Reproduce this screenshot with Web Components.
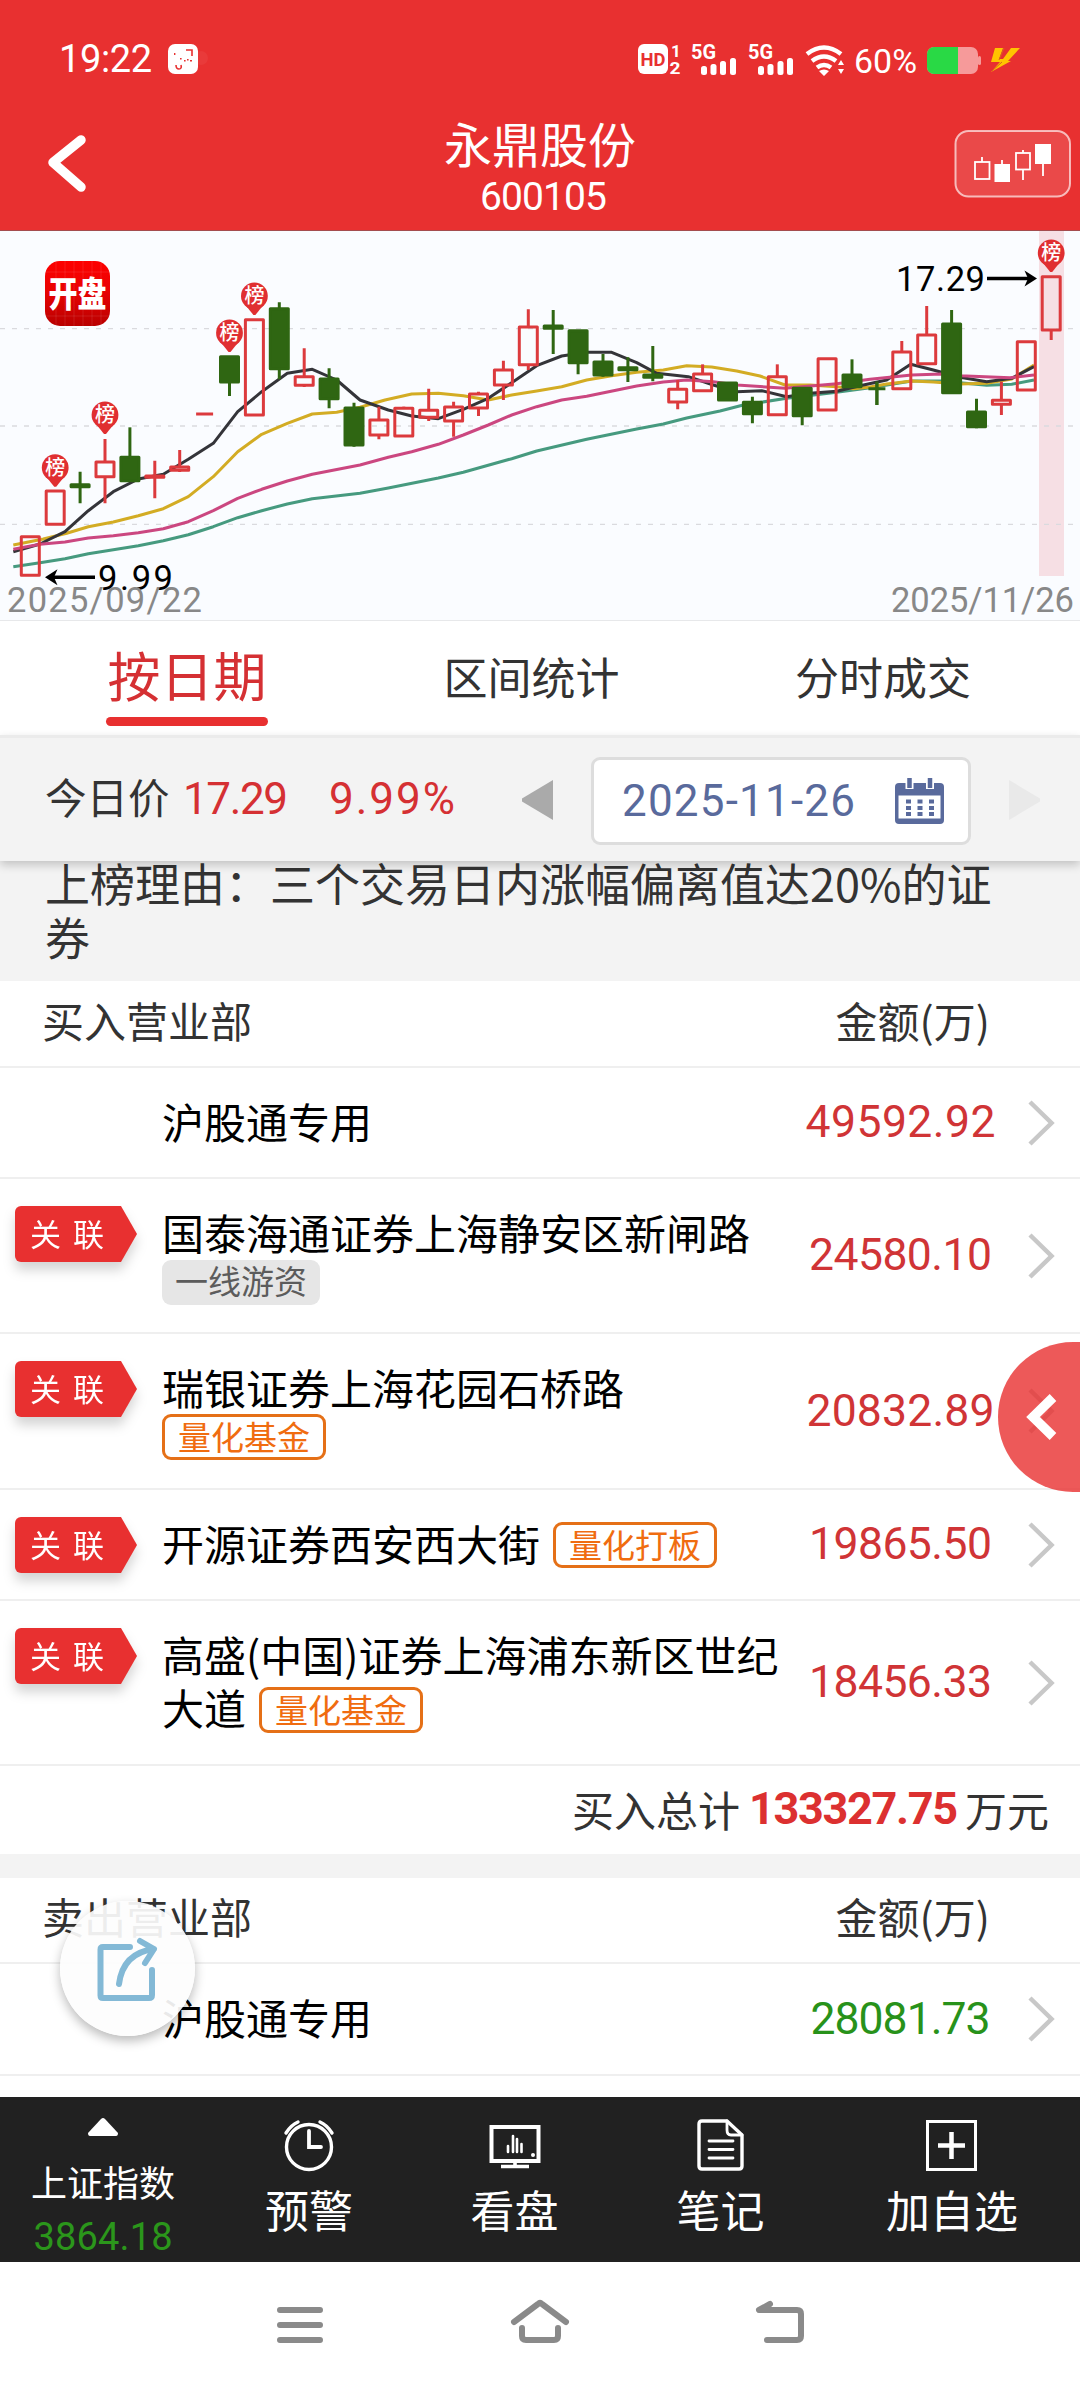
<!DOCTYPE html>
<html lang="zh-CN">
<head>
<meta charset="utf-8">
<title>永鼎股份 600105</title>
<style>
html,body{margin:0;padding:0}
body{width:1080px;height:2388px;overflow:hidden;background:#fff;font-family:Roboto,"Noto Sans CJK SC",sans-serif;color:#333}
</style>
</head>
<body>
<stock-app></stock-app>
<script>
const define=(name,html,init)=>{
  const tpl=document.createElement('template');
  tpl.innerHTML=html;
  customElements.define(name,class extends HTMLElement{
    connectedCallback(){
      if(this.shadowRoot)return;
      this.attachShadow({mode:'open'}).append(tpl.content.cloneNode(true));
      if(init)init.call(this,this.shadowRoot);
    }
  });
};

/* Number label: spaces its characters so that the run is exactly w pixels wide */
define('num-text','<style>:host{display:inline-block;white-space:nowrap;line-height:1}span{display:inline-block}</style><span></span>',function(r){
  const s=r.querySelector('span'),t=this.getAttribute('text'),w=+this.getAttribute('w');
  s.textContent=t;
  this.style.fontSize=this.getAttribute('size')+'px';
  const g=(w-s.getBoundingClientRect().width)/(t.length-1);
  s.style.letterSpacing=g+'px';
  s.style.marginRight=-g+'px';
});

define('status-bar',`<style>
:host{display:flex;height:88px;padding-top:29px;box-sizing:border-box;color:#fff}
num-text{margin:11px 0 0 59px}
svg{display:block;width:60px;height:60px;margin-left:16px}
.r{width:400px;margin-left:auto;margin-right:50px}
</style>
<num-text text="19:22" size="38" w="93"></num-text>
<svg viewBox="168 29 60 60"><rect x="168" y="44" width="30" height="30" rx="7" fill="#fff"/><circle cx="201" cy="58" r="7" fill="#fff" opacity=".05"/><path d="M186 50h6v6M176 65q0 4 3 4t2-4" fill="none" stroke="#e83030" stroke-width="1.6"/><path d="M180 58h1.6v1.6H180zM184 60h1.6v1.6H184zM190 60h2v1.6h-2zM174 53h1.4v2H174zM187 59h1.6v1.6H187z" fill="#e83030"/></svg>
<svg class="r" viewBox="630 29 400 60" fill="#fff" font-weight="700">
<rect x="638" y="44" width="30" height="30" rx="6"/><text x="640.500" y="66" font-size="18" textLength="25" lengthAdjust="spacingAndGlyphs" fill="#e83030">HD</text>
<text x="671" y="57" font-size="17">1</text><text x="669.500" y="74" font-size="17" textLength="11" lengthAdjust="spacingAndGlyphs">2</text>
<text x="691" y="59" font-size="20" textLength="25" lengthAdjust="spacingAndGlyphs">5G</text>
<rect x="701" y="66" width="6" height="9" rx="2.500"/><rect x="710.500" y="64" width="6" height="11" rx="2.500"/><rect x="720" y="61" width="6" height="14" rx="2.500"/><rect x="730" y="58" width="6" height="17" rx="2.500"/>
<text x="748" y="59" font-size="20" textLength="25" lengthAdjust="spacingAndGlyphs">5G</text>
<rect x="758" y="66" width="6" height="9" rx="2.500"/><rect x="767.500" y="64" width="6" height="11" rx="2.500"/><rect x="777.500" y="61" width="6" height="14" rx="2.500"/><rect x="787" y="58" width="6" height="17" rx="2.500"/>
<g fill="none" stroke="#fff" stroke-width="4.500"><path d="M807 54q17-13 34 0"/><path d="M812 61q12-9 24 0"/><path d="M817 67.500q7-5 14 0"/></g><path d="M819 71q5-3 10 0l-5 5zM838 65l3-5 3 5zM838 69h6l-3 5z"/>
<text x="854" y="73" font-size="32.500" font-weight="400" textLength="63" lengthAdjust="spacingAndGlyphs">60%</text>
<rect x="927" y="47" width="51" height="27" rx="7" fill="#f69a9a"/><path d="M934 47h24v27h-24a7 7 0 0 1-7-7V54a7 7 0 0 1 7-7z" fill="#29d945"/><rect x="978" y="56" width="3" height="9" rx="1.500" fill="#f69a9a"/>
<path d="M995 48h8l-4 11h4l8-11h9l-12 13h3l-20 11 9-10h-9z" fill="#ffc400"/><path d="M1004 48l-5 12M992 71l10-9" stroke="#d8641d" stroke-width="1"/>
</svg>`);

define('title-bar',`<style>
:host{display:grid;grid-template-columns:360px 1fr 360px;height:142px;color:#fff}
svg{display:block}
.b{width:60px;height:70px;margin:41px 0 0 40px}
.t{text-align:center;display:flex;flex-direction:column;align-items:center}
.n{font-size:48px;line-height:56px;margin-top:31px}
num-text{margin:3px 0 0 7px}
.k{margin:42px 0 0 234px;width:117px;height:68px}
</style>
<svg class="b" viewBox="40 129 60 70"><path d="M81 140L53 162.500 81 187" fill="none" stroke="#fff" stroke-width="9.500" stroke-linecap="round" stroke-linejoin="round"/></svg>
<div class="t"><div class="n">永鼎股份</div><num-text text="600105" size="39" w="127"></num-text></div>
<svg class="k" viewBox="954 130 117 68"><rect x="955.500" y="131" width="114.500" height="65.500" rx="13" fill="#fff" fill-opacity=".12" stroke="#fff" stroke-opacity=".65" stroke-width="2"/><g fill="none" stroke="#fff" stroke-width="1.800"><path d="M982 157v5M1002 160v5M1023 150v3M1023 170v10M1043 164v12"/><rect x="975" y="162" width="14.500" height="17"/><rect x="1016" y="153" width="14" height="16.500"/></g><rect x="994.500" y="164" width="15.500" height="18" fill="#fff"/><rect x="1035" y="144" width="16" height="20" fill="#fff"/></svg>`);

define('k-chart','<style>:host{display:block;height:391px;background:#fafcff;border-top:1px solid #a44c4e;border-bottom:1px solid #e7e8ea;box-sizing:border-box}svg{display:block}</style><svg width="1080" height="389" viewBox="0 231 1080 389"></svg>',function(r){
  const Y=v=>230+v/3, X=i=>30.3+24.9*i, RED='#dc3a3d', GREEN='#2f6612';
  let h='<rect x="1039" y="231" width="25" height="345" fill="#f6dfe4"/>';
  [328.7,426,524.3].forEach(y=>h+=`<path d="M0 ${y}H1074" stroke="#dadade" stroke-width="1.3" stroke-dasharray="5 7"/>`);
  const lines=[
   ['#469a7f','40,1010 120,998 195,986 265,971 415,947 490,932 565,914 640,890 713,863 785,842 862,822 937,806 1080,790 1165,774 1315,744 1390,727 1535,686 1610,663 1760,628 1910,597 1990,582 2060,564 2160,543 2230,525 2360,505 2510,487 2610,473 2735,453 2825,453 2960,466 3035,463 3102,450'],
   ['#d3ac24','40,945 130,927 200,910 265,890 340,876 415,857 490,836 565,800 640,740 713,665 785,613 862,580 937,552 1010,547 1080,532 1155,510 1235,492 1315,490 1390,497 1465,510 1535,495 1610,483 1685,470 1760,450 1835,437 1910,427 1990,420 2060,407 2135,411 2210,423 2280,438 2355,465 2430,465 2510,470 2560,476 2610,471 2660,462 2735,453 2800,456 2880,462 2960,460 3035,447 3102,405'],
   ['#343439','40,965 120,942 195,905 265,842 340,785 415,747 490,733 565,688 640,640 713,545 785,485 862,430 937,418 1010,450 1080,510 1165,540 1235,558 1315,566 1390,538 1465,505 1535,458 1610,407 1685,378 1760,367 1835,367 1910,398 1970,430 2065,440 2140,465 2210,485 2285,482 2360,500 2430,490 2510,484 2580,467 2660,450 2732,403 2800,420 2880,442 2960,455 3035,445 3102,410'],
   ['#cb4780','40,958 120,943 195,936 265,924 340,917 415,908 490,896 565,875 640,842 713,805 785,778 862,753 937,733 1080,705 1165,682 1235,665 1315,643 1390,615 1465,585 1535,555 1610,530 1685,510 1760,499 1910,468 1990,456 2060,450 2140,455 2210,465 2355,475 2510,461 2610,448 2735,435 2825,432 2880,437 3030,443 3102,435']];
  lines.forEach(([c,p])=>h+=`<polyline fill="none" stroke="${c}" stroke-width="3" stroke-linejoin="round" points="${p.split(' ').map(q=>{const[a,b]=q.split(',');return (a/3).toFixed(1)+','+Y(+b).toFixed(1)}).join(' ')}"/>`);
  /* side, high, body top, body bottom, low */
  const data='r920,920,1036,1036 r783,783,883,883 g725,764,770,820 r627,696,740,820 g592,682,752,752 r692,738,742,805 r660,711,721,726 d g378,380,456,498 r269,269,555,555 g217,236,416,448 r355,440,466,471 g415,447,506,535 g518,534,645,650 r530,570,615,628 r530,535,618,618 r476,541,562,573 r515,531,573,620 r485,492,534,558 r392,420,465,510 r238,291,404,420 g240,288,295,372 g300,302,398,433 g372,396,435,440 g382,413,419,456 g348,435,442,454 r450,478,516,538 r403,432,482,482 g457,459,510,510 g500,517,551,580 r403,440,554,554 g472,475,557,586 r386,386,540,540 g388,435,470,470 t455,476,476,525 r333,366,476,480 r228,315,401,401 g240,282,488,488 g506,546,590,595 r455,511,523,555 r335,335,480,480 r140,140,300,330'.split(' ');
  data.forEach((s,i)=>{
    const x=X(i);
    if(s==='d'){h+=`<path d="M${x-8.5} ${Y(552)}h17" stroke="${RED}" stroke-width="3"/>`;return}
    const red=s[0]==='r',c=red?RED:GREEN,[a,t,b,l]=s.slice(1).split(',').map(v=>Y(+v));
    h+=`<path d="M${x} ${a}V${t}M${x} ${b}V${l}" stroke="${c}" stroke-width="3"/>`;
    h+=s[0]==='t'?`<path d="M${x-8.5} ${t}h17M${x} ${a}V${l}" stroke="${c}" stroke-width="3"/>`
      :`<rect x="${x-9}" y="${t}" width="18" height="${Math.max(b-t,.8)}" fill="${red?'none':c}" stroke="${c}" stroke-width="3" stroke-linejoin="round"/>`;
  });
  [[1,486.7],[3,434],[8,352],[9,315],[41,272]].forEach(([i,t])=>{
    const x=X(i);
    h+=`<circle cx="${x}" cy="${t-19}" r="13.4" fill="#e02f31"/><path d="M${x-9} ${t-10}h18L${x+1} ${t}h-2z" fill="#e02f31"/><text x="${x}" y="${t-12}" font-size="20" font-weight="500" fill="#fff" text-anchor="middle">榜</text>`;
  });
  h+=`<defs><linearGradient id="g" x1="0" y1="0" x2="0" y2="1"><stop offset="0" stop-color="#fd0000"/><stop offset=".45" stop-color="#ea0303"/><stop offset="1" stop-color="#b90000"/></linearGradient></defs>
  <rect x="45" y="261" width="65" height="65" rx="15" fill="url(#g)"/>
  <path d="M56 262v63M65 261v65M74 261v65M83 261v65M92 261v65M101 262v63M46 272h63M46 316h63" stroke="#fff" stroke-opacity=".13" stroke-width=".8"/>
  <text transform="translate(77.500 307) scale(1 1.22)" x="0" y="0" font-size="29" font-weight="900" fill="#fff" text-anchor="middle">开盘</text>
  <g font-size="34.500"><text x="896" y="291" fill="#000" textLength="89">17.29</text><text x="98" y="590" fill="#000" textLength="75">9.99</text>
  <text x="7" y="612" fill="#888" textLength="195">2025/09/22</text><text x="891" y="612" fill="#888" textLength="183">2025/11/26</text></g>
  <path d="M987 278.500h42M95 577.300H53" stroke="#000" stroke-width="3.400"/><path d="M1037 278.500l-12.500-8 3.500 8-3.500 8zM45 577.300l12.500-8-3.500 8 3.500 8z"/>`;
  r.querySelector('svg').innerHTML=h;
});

define('tab-bar',`<style>
:host{display:grid;grid-template-columns:374px 315px 1fr;height:114px;font-size:44px;line-height:64px}
div{text-align:center;padding-top:27px}
.a{font-size:53px;color:#d53033;display:flex;flex-direction:column;align-items:center;padding-top:26px}
.z{padding-right:3px}
i{display:block;width:162px;height:9px;border-radius:4.5px;background:#e83030;margin-top:6px}
</style><div class="a">按日期<i></i></div><div>区间统计</div><div class="z">分时成交</div>`);

define('date-bar',`<style>
:host{display:flex;align-items:center;height:126px;box-sizing:border-box;background:#f3f3f3;border-top:3px solid #ebebeb;box-shadow:0 4px 9px rgba(0,0,0,.2);position:relative;z-index:1;font-size:41.5px}
.l{margin-left:45px;line-height:60px;width:138px;white-space:nowrap}
.p{width:146px}.c{width:190px}
num-text{color:#d53033}
.d{width:380px;height:88px;box-sizing:border-box;border:3px solid #ddd;border-radius:9px;background:#fff;display:flex;align-items:center;margin-left:38px;margin-right:38px;padding-left:28px;margin-top:2px}
.d num-text{color:#596a9c;width:273px}
svg{display:block}
</style>
<span class="l">今日价</span><span class="p"><num-text text="17.29" size="44" w="105"></num-text></span><span class="c"><num-text text="9.99%" size="44" w="126"></num-text></span>
<svg width="34" height="40"><path d="M34 0v40L3 21.500v-3z" fill="#aaa"/></svg>
<div class="d"><num-text text="2025-11-26" size="44" w="233"></num-text>
<svg width="49" height="46" viewBox="896 779 49 46"><path d="M900 784h41a4 4 0 0 1 4 4v33a4 4 0 0 1-4 4h-41a4 4 0 0 1-4-4v-33a4 4 0 0 1 4-4z" fill="#596a9c"/><path d="M899.500 796.500h42v23h-42z" fill="#fff"/><path d="M910.500 779v11M931 779v11" stroke="#fff" stroke-width="8"/><path d="M910.500 779v10M931 779v10" stroke="#596a9c" stroke-width="4.500"/><path d="M907 802.500h28M907 809h28M907 815h28" stroke="#596a9c" stroke-width="4" stroke-dasharray="5 6.500"/></svg></div>
<svg width="31" height="40"><path d="M0 0v40l31-18.500v-3z" fill="#e9e9e9"/></svg>`);

define('reason-note',`<style>:host{display:block;height:120px;background:#f3f3f3}p{margin:0 80px 0 45px;font:45px/54px "Noto Sans CJK SC",sans-serif;position:relative;top:-5.5px}</style><p>上榜理由：三个交易日内涨幅偏离值达20%的证券</p>`);

define('table-head',`<style>:host{display:flex;align-items:center;box-sizing:border-box;border-bottom:2px solid #efefef;font:42px/60px "Noto Sans CJK SC",sans-serif;padding:0 90px 8px 42px;justify-content:space-between}</style><span><slot></slot></span><span>金额(万)</span>`);

define('link-badge',`<style>:host{display:block;width:122px;height:56px;filter:drop-shadow(0 8px 6px rgba(0,0,0,.17))}
div{height:56px;background:#e83030;border-radius:6px 0 0 6px;clip-path:polygon(0 0,106px 0,100% 50%,106px 100%,0 100%);color:#fff;font-size:31px;line-height:53px;letter-spacing:12px;padding-left:15px;white-space:nowrap}</style><div>关联</div>`);

define('seat-tag',`<style>:host{display:inline-block;box-sizing:border-box;height:46px;width:164px;border:3px solid #e57017;border-radius:9px;color:#f06c10;font-size:33px;line-height:38px;text-align:center;white-space:nowrap}
:host([gray]){background:#e6e6e6;border:0;width:158px;height:45px;line-height:41px;color:#5c5c5c}</style><slot></slot>`);

define('seat-row',`<style>
:host{display:flex;box-sizing:border-box;border-bottom:2px solid #efefef;color:#000;font:42px/53px "Noto Sans CJK SC",sans-serif}
.b{width:148px;padding:27px 0 0 15px;box-sizing:border-box;flex:none}
.n{width:625px;margin-left:14px;padding-top:26px;box-sizing:border-box;flex:none}
.m{width:227px;display:flex;justify-content:center;align-items:center;font-family:Roboto;color:#d03436}
:host([sell]) .m{color:#28921a}
svg{align-self:center;margin-left:13px}
</style><div class="b"></div><div class="n"><slot></slot></div><div class="m"></div><svg width="30" height="48" viewBox="0 0 30 48"><path d="M3 3l21.500 21L3 45" fill="none" stroke="#c8c8c8" stroke-width="4.500"/></svg>`,function(r){
  if(this.hasAttribute('linked'))r.querySelector('.b').innerHTML='<link-badge></link-badge>';
  r.querySelector('.m').innerHTML=`<num-text text="${this.getAttribute('amount')}" size="44.500" w="${this.getAttribute('w')}"></num-text>`;
});

define('total-row',`<style>:host{display:flex;height:88px;align-items:center;justify-content:flex-end;padding:0 31px 3px 0;box-sizing:border-box;font:42px/60px "Noto Sans CJK SC",sans-serif}num-text{font-family:Roboto;font-weight:700;color:#dc3030;margin:0 7px 0 9px}</style>买入总计<num-text text="133327.75" size="45" w="209"></num-text>万元`);

define('tool-item',`<style>:host{display:flex;flex-direction:column;align-items:center;color:#fff;font-size:44px;line-height:60px}::slotted(svg){display:block;margin:21px 0 11px}</style><slot name="i"></slot><slot></slot>`);

define('tool-bar',`<style>
:host{display:grid;grid-template-columns:206px 206px 205px 207px 1fr;height:165px;background:#212121;color:#fff}
.x{display:flex;flex-direction:column;align-items:center;font-size:36px;line-height:50px}
.x svg{margin:21px 0 24px}num-text{color:#2b961b;margin-top:8px}
.x div{white-space:nowrap}
</style>
<div class="x"><svg width="30" height="18"><path d="M15 0q1 0 2 1l13 14q0 3-2 3H2q-2 0-2-3L13 1q1-1 2-1z" fill="#fff"/></svg><div>上证指数</div><num-text text="3864.18" size="38" w="139"></num-text></div>
<tool-item><svg slot="i" width="54" height="54" viewBox="0 0 54 54" fill="none" stroke="#fff" stroke-width="3.400"><circle cx="27" cy="29" r="22.500"/><path d="M27 13v16h12" stroke-width="3.800" stroke-linecap="round"/><path d="M4 15q5-8 12-11M50 15q-5-8-12-11" stroke-linecap="round"/></svg>预警</tool-item>
<tool-item><svg slot="i" width="54" height="54" viewBox="0 0 54 54" fill="none" stroke="#fff"><rect x="3.500" y="9" width="47" height="34" stroke-width="4"/><path d="M20 28v6M25 18v16M29 21v13M33.500 26v8" stroke-width="2.600" stroke-linecap="round"/><path d="M13 48.500h28M27 44v4" stroke-width="3.600"/><circle cx="45" cy="37" r="2" fill="#fff" stroke="none"/></svg>看盘</tool-item>
<tool-item><svg slot="i" width="54" height="54" viewBox="0 0 54 54" fill="none" stroke="#fff" stroke-width="3.400" stroke-linejoin="round" stroke-linecap="round"><path d="M8 3h25l15 14v31q0 3-3 3H8q-3 0-3-3V6q0-3 3-3z"/><path d="M33 3v9q0 5 4 5h11M15 23h24M15 31.500h24M15 40h24" stroke-width="2.800"/></svg>笔记</tool-item>
<tool-item><svg slot="i" width="54" height="54" viewBox="0 0 54 54" fill="none" stroke="#fff"><rect x="2.500" y="3.500" width="48" height="48" stroke-width="3"/><path d="M13 27.500h27M26.500 14v27" stroke-width="4.500"/></svg>加自选</tool-item>`);

define('nav-bar',`<style>:host{display:block;height:126px;background:#fff}svg{display:block}</style>
<svg width="1080" height="126" viewBox="0 2262 1080 126" fill="none" stroke="#8a8a8a" stroke-width="6" stroke-linecap="round" stroke-linejoin="round"><path d="M280 2310h40M280 2325h40M280 2340h40M514 2322l24-18q2-2 4 0l24 18M522 2328v8q0 4 4 4h28q4 0 4-4v-8M770 2304l-11 6h38q4 0 4 4v22q0 4-4 4h-30"/></svg>`);

define('side-handle',`<style>:host{position:absolute;right:0;top:1342px;z-index:2;width:82px;height:150px;border-radius:75px 0 0 75px;background:rgba(232,48,48,.8)}svg{display:block}</style>
<svg width="82" height="150"><path d="M55 55.500L35 75l20 19.500" fill="none" stroke="#fff" stroke-width="9.500"/></svg>`);

define('share-button',`<style>:host{position:absolute;left:60px;top:1901px;z-index:2;width:135px;height:135px;border-radius:50%;background:rgba(253,253,253,.92);box-shadow:0 5px 11px rgba(0,0,0,.27)}svg{display:block}</style>
<svg width="135" height="135" viewBox="60 1901 135 135" fill="none" stroke="#83b9d6" stroke-width="6" stroke-linecap="round" stroke-linejoin="round"><path d="M130 1947h-27q-2.500 0-2.500 2.500v46q0 2.500 2.500 2.500h46q3 0 3-3v-25"/><path d="M119 1984q4-31 35-35M140 1941l14 8-9 14"/></svg>`);

define('stock-app',`<style>
:host{display:block;position:relative;width:1080px;height:2388px;overflow:hidden}
header{background:#e83030}
.gap{height:24px;background:#f3f3f3}
.rest{height:21px}
</style>
<header><status-bar></status-bar><title-bar></title-bar></header>
<k-chart></k-chart><tab-bar></tab-bar><date-bar></date-bar><reason-note></reason-note>
<table-head style="height:87px">买入营业部</table-head>
<seat-row style="height:111px" amount="49592.92" w="190">沪股通专用</seat-row>
<seat-row style="height:155px" linked amount="24580.10" w="183">国泰海通证券上海静安区新闸路<br><seat-tag gray style="vertical-align:top;margin-top:2px">一线游资</seat-tag></seat-row>
<seat-row style="height:156px" linked amount="20832.89" w="188">瑞银证券上海花园石桥路<br><seat-tag style="vertical-align:top;margin-top:1px">量化基金</seat-tag></seat-row>
<seat-row style="height:111px" linked amount="19865.50" w="183">开源证券西安西大街<seat-tag style="vertical-align:top;margin:6px 0 0 13px">量化打板</seat-tag></seat-row>
<seat-row style="height:165px" linked amount="18456.33" w="183">高盛(中国)证券上海浦东新区世纪大道<seat-tag style="vertical-align:top;margin:7px 0 0 13px">量化基金</seat-tag></seat-row>
<total-row></total-row><div class="gap"></div>
<table-head style="height:86px">卖出营业部</table-head>
<seat-row style="height:112px" sell amount="28081.73" w="180">沪股通专用</seat-row>
<div class="rest"></div>
<tool-bar></tool-bar><nav-bar></nav-bar>
<side-handle></side-handle><share-button></share-button>`);
</script>
</body>
</html>
